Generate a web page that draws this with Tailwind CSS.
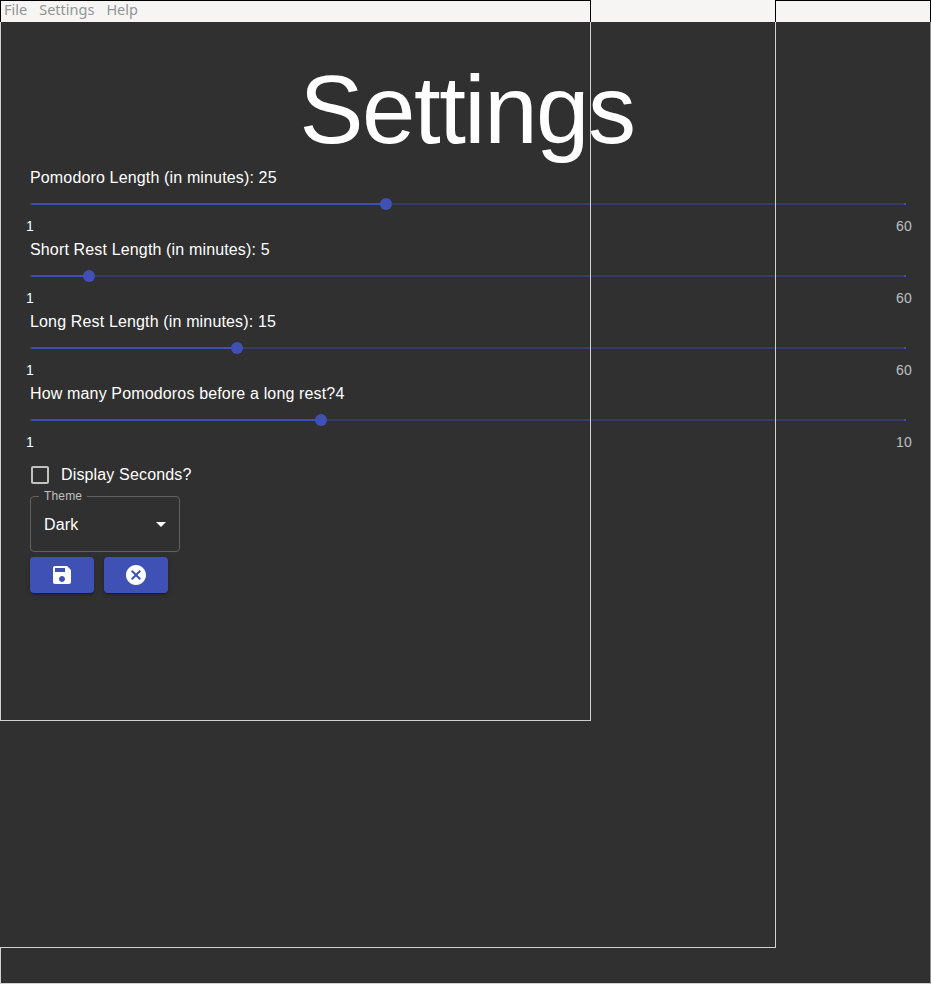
<!DOCTYPE html>
<html lang="en">
<head>
<meta charset="utf-8">
<title>Settings</title>
<script src="https://cdn.jsdelivr.net/npm/@tailwindcss/browser@4"></script>
</head>
<body class="relative h-[984px] w-[931px] overflow-hidden bg-[#303030] font-['Liberation_Sans',Arial,sans-serif] text-base leading-6 tracking-[0.00938em] text-white">
<nav class="flex h-[22px] gap-3 bg-[#f6f5f4] pl-1 font-['Noto_Sans',sans-serif] text-[14.5px] leading-[18px] tracking-normal text-[#929595]">
  <span>File</span><span>Settings</span><span>Help</span>
</nav>
<main class="pt-8 pl-[30px]">
  <h1 class="w-[874px] text-center text-[96px] leading-[112px] tracking-[-0.01562em]">Settings</h1>
  <section class="w-[875px]">
    <div class="h-[72px]">
      <p>Pomodoro Length (in minutes): 25</p>
      <div class="relative h-7 py-[13px]">
        <div class="h-0.5 w-full bg-[#3f51b5]/40"><div class="h-full bg-[#3f51b5]" style="width:40.678%"></div></div>
        <i class="absolute top-[13px] left-0 h-0.5 w-0.5 bg-[#424242]/80"></i><i class="absolute top-[13px] left-full -ml-px h-0.5 w-0.5 bg-[#3f51b5]"></i>
        <i class="absolute top-2 -ml-1.5 size-3 rounded-full bg-[#3f51b5]" style="left:40.678%"></i>
        <span class="absolute top-[26px] left-0 -translate-x-1/2 text-sm tracking-[0.01071em]">1</span>
        <span class="absolute top-[26px] left-full -ml-px -translate-x-1/2 text-sm tracking-[0.01071em] text-white/70">60</span>
      </div>
    </div>
    <div class="h-[72px]">
      <p>Short Rest Length (in minutes): 5</p>
      <div class="relative h-7 py-[13px]">
        <div class="h-0.5 w-full bg-[#3f51b5]/40"><div class="h-full bg-[#3f51b5]" style="width:6.78%"></div></div>
        <i class="absolute top-[13px] left-0 h-0.5 w-0.5 bg-[#424242]/80"></i><i class="absolute top-[13px] left-full -ml-px h-0.5 w-0.5 bg-[#3f51b5]"></i>
        <i class="absolute top-2 -ml-1.5 size-3 rounded-full bg-[#3f51b5]" style="left:6.78%"></i>
        <span class="absolute top-[26px] left-0 -translate-x-1/2 text-sm tracking-[0.01071em]">1</span>
        <span class="absolute top-[26px] left-full -ml-px -translate-x-1/2 text-sm tracking-[0.01071em] text-white/70">60</span>
      </div>
    </div>
    <div class="h-[72px]">
      <p>Long Rest Length (in minutes): 15</p>
      <div class="relative h-7 py-[13px]">
        <div class="h-0.5 w-full bg-[#3f51b5]/40"><div class="h-full bg-[#3f51b5]" style="width:23.729%"></div></div>
        <i class="absolute top-[13px] left-0 h-0.5 w-0.5 bg-[#424242]/80"></i><i class="absolute top-[13px] left-full -ml-px h-0.5 w-0.5 bg-[#3f51b5]"></i>
        <i class="absolute top-2 -ml-1.5 size-3 rounded-full bg-[#3f51b5]" style="left:23.68%"></i>
        <span class="absolute top-[26px] left-0 -translate-x-1/2 text-sm tracking-[0.01071em]">1</span>
        <span class="absolute top-[26px] left-full -ml-px -translate-x-1/2 text-sm tracking-[0.01071em] text-white/70">60</span>
      </div>
    </div>
    <div class="h-[72px]">
      <p>How many Pomodoros before a long rest?4</p>
      <div class="relative h-7 py-[13px]">
        <div class="h-0.5 w-full bg-[#3f51b5]/40"><div class="h-full bg-[#3f51b5]" style="width:33.333%"></div></div>
        <i class="absolute top-[13px] left-0 h-0.5 w-0.5 bg-[#424242]/80"></i><i class="absolute top-[13px] left-full -ml-px h-0.5 w-0.5 bg-[#3f51b5]"></i>
        <i class="absolute top-2 -ml-1.5 size-3 rounded-full bg-[#3f51b5]" style="left:33.28%"></i>
        <span class="absolute top-[26px] left-0 -translate-x-1/2 text-sm tracking-[0.01071em]">1</span>
        <span class="absolute top-[26px] left-full -ml-px -translate-x-1/2 text-sm tracking-[0.01071em] text-white/70">10</span>
      </div>
    </div>
  </section>
  <label class="-ml-[2px] flex h-[42px] items-center gap-[9px]">
    <svg class="size-6 fill-[#c1c1c1]" viewBox="0 0 24 24"><path d="M19 5v14H5V5h14m0-2H5c-1.1 0-2 .9-2 2v14c0 1.1.9 2 2 2h14c1.1 0 2-.9 2-2V5c0-1.1-.9-2-2-2z"/></svg>
    <span>Display Seconds?</span>
  </label>
  <div class="relative flex h-14 w-[150px] items-center justify-between rounded border border-[#616161] pr-[6px] pl-[13px]">
    <span class="absolute -top-[7px] left-2 bg-[#303030] pr-[5px] pl-[5px] text-xs leading-3 text-[#c1c1c1]">Theme</span>
    <span class="pt-0.5">Dark</span>
    <svg class="size-6 fill-white" viewBox="0 0 24 24"><path d="M7 10l5 5 5-5z"/></svg>
  </div>
  <div class="mt-[5px] flex gap-2.5">
    <button class="flex h-9 w-16 items-center justify-center rounded bg-[#3f51b5] shadow-[0_3px_1px_-2px_rgba(0,0,0,0.2),0_2px_2px_0_rgba(0,0,0,0.14),0_1px_5px_0_rgba(0,0,0,0.12)]" aria-label="Save">
      <svg class="size-6 fill-white" viewBox="0 0 24 24"><path d="M17 3H5c-1.11 0-2 .9-2 2v14c0 1.1.89 2 2 2h14c1.1 0 2-.9 2-2V7l-4-4zm-5 16c-1.66 0-3-1.34-3-3s1.34-3 3-3 3 1.34 3 3-1.34 3-3 3zm3-10H5V5h10v4z"/></svg>
    </button>
    <button class="flex h-9 w-16 items-center justify-center rounded bg-[#3f51b5] shadow-[0_3px_1px_-2px_rgba(0,0,0,0.2),0_2px_2px_0_rgba(0,0,0,0.14),0_1px_5px_0_rgba(0,0,0,0.12)]" aria-label="Cancel">
      <svg class="size-6 fill-white" viewBox="0 0 24 24"><path d="M12 2C6.47 2 2 6.47 2 12s4.47 10 10 10 10-4.47 10-10S17.53 2 12 2zm5 13.59L15.59 17 12 13.41 8.41 17 7 15.59 10.59 12 7 8.41 8.41 7 12 10.59 15.59 7 17 8.41 13.41 12 17 15.59z"/></svg>
    </button>
  </div>
</main>
<!-- Window outlines -->
<div class="pointer-events-none absolute top-0 left-0 h-[22px] w-[591px] border-x border-t border-black"></div>
<div class="pointer-events-none absolute top-[22px] left-0 h-[699px] w-[591px] border-x border-b border-[#d0cfce]"></div>
<div class="pointer-events-none absolute top-0 left-[775px] h-[22px] w-[156px] border-x border-t border-black"></div>
<div class="pointer-events-none absolute top-[22px] left-0 h-[926px] w-[776px] border-r border-b border-[#d0cfce]"></div>
<div class="pointer-events-none absolute top-[948px] left-0 h-9 w-px bg-[#d0cfce]"></div>
<div class="pointer-events-none absolute top-[22px] left-0 h-[962px] w-[931px] border-r border-b border-r-[#8f8f8f] border-b-[#d0cfce]"></div>
</body>
</html>
